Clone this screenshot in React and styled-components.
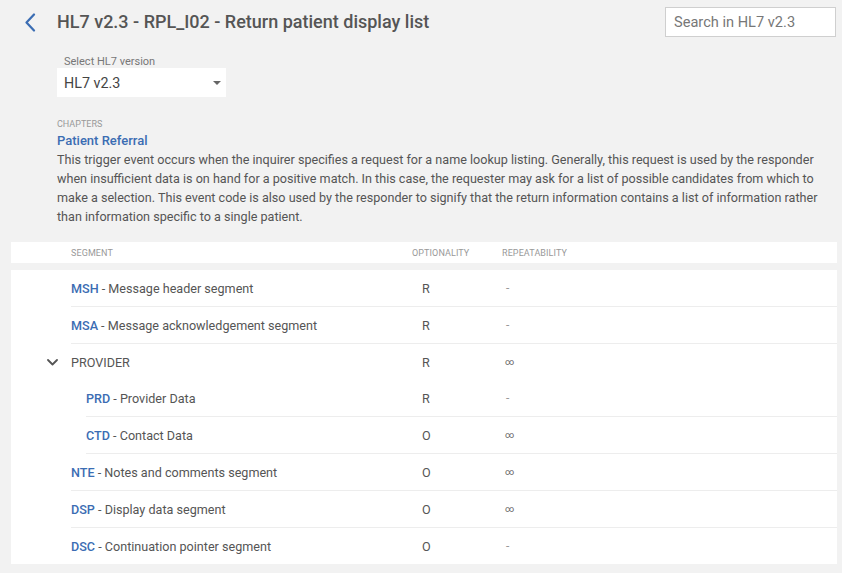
import React from "react";
import styled, { createGlobalStyle } from "styled-components";

const Global = createGlobalStyle`
  html, body { margin: 0; padding: 0; background: #f2f2f2; }
  body { font-family: Roboto, "Liberation Sans", Arial, sans-serif; color: #555; }
  * { box-sizing: border-box; }
`;

const Page = styled.div`
  width: 842px;
  min-height: 573px;
  background: #f2f2f2;
  padding-bottom: 9px;
`;

const TopBar = styled.header`
  display: flex;
  align-items: flex-start;
  height: 44px;
  padding: 7px 6px 0 22px;
`;

const BackButton = styled.button`
  width: 16px;
  height: 30px;
  padding: 0;
  margin: 0 19px 0 0;
  border: none;
  background: transparent;
  display: flex;
  align-items: center;
  justify-content: center;
  cursor: pointer;
`;

const Title = styled.h1`
  flex: 1;
  margin: 0;
  font-size: 18px;
  font-weight: 500;
  line-height: 30px;
  color: #555;
`;

const Search = styled.input`
  width: 171px;
  height: 30px;
  border: 1px solid #cfcfcf;
  background: #fff;
  padding: 0 8px;
  font-family: inherit;
  font-size: 14.6px;
  color: #555;
  outline: none;
  &::placeholder { color: #777; }
`;

const Content = styled.section`
  padding: 0 14px 0 57px;
`;

const Field = styled.div`
  display: flex;
  flex-direction: column;
  margin-top: 12px;
`;

const FieldLabel = styled.label`
  font-size: 11px;
  line-height: 12px;
  color: #777;
  padding-left: 7px;
`;

const SelectBox = styled.div`
  width: 169px;
  height: 29px;
  background: #fff;
  display: flex;
  align-items: center;
  justify-content: space-between;
  padding: 0 4px 0 7px;
  font-size: 14.3px;
  color: #444;
`;

const Caret = styled.span`
  width: 0;
  height: 0;
  border-left: 4px solid transparent;
  border-right: 4px solid transparent;
  border-top: 4px solid #666;
  margin-right: 1px;
`;

const Overline = styled.div`
  margin-top: 21px;
  font-size: 9px;
  line-height: 13px;
  text-transform: uppercase;
  color: #999;
`;

const Chapter = styled.a`
  display: block;
  font-size: 13px;
  font-weight: 500;
  line-height: 19px;
  color: #3b6db3;
  text-decoration: none;
`;

const Description = styled.p`
  margin: 0;
  font-size: 12.6px;
  line-height: 19px;
  color: #555;
`;

const TableHead = styled.div`
  display: flex;
  align-items: center;
  height: 21px;
  margin: 16px 5px 0 11px;
  padding-left: 60px;
  background: #fff;
`;

const HeadCell = styled.div`
  width: ${(p) => p.$w}px;
  font-size: 9px;
  text-transform: uppercase;
  color: #999;
  letter-spacing: 0.1px;
`;

const TableBody = styled.div`
  margin: 7px 5px 0 11px;
  background: #fff;
`;

const Row = styled.div`
  display: flex;
  align-items: center;
  height: ${(p) => (p.$noLine ? 36 : 37)}px;
  margin-left: ${(p) => p.$indent}px;
  border-bottom: ${(p) => (p.$noLine ? "none" : "1px solid #ededed")};
`;

const Toggle = styled.span`
  width: 24px;
  display: flex;
  align-items: center;
  justify-content: flex-start;
`;

const SegmentCell = styled.div`
  width: ${(p) => p.$w}px;
  font-size: 12.6px;
  color: #555;
  white-space: nowrap;
`;

const Code = styled.span`
  color: #3b6db3;
  font-weight: 500;
`;

const OptCell = styled.div`
  width: 90px;
  padding-left: 10px;
  font-size: 12.6px;
  color: #555;
`;

const RepCell = styled.div`
  padding-left: ${(p) => (p.$inf ? 3 : 4)}px;
  font-size: ${(p) => (p.$inf ? 9 : 12)}px;
  color: ${(p) => (p.$inf ? "#666" : "#999")};
`;

const rows = [
  { code: "MSH", name: "Message header segment", opt: "R", rep: "-", level: 0 },
  { code: "MSA", name: "Message acknowledgement segment", opt: "R", rep: "-", level: 0 },
  { group: "PROVIDER", opt: "R", rep: "∞", level: 0 },
  { code: "PRD", name: "Provider Data", opt: "R", rep: "-", level: 1 },
  { code: "CTD", name: "Contact Data", opt: "O", rep: "∞", level: 1 },
  { code: "NTE", name: "Notes and comments segment", opt: "O", rep: "∞", level: 0 },
  { code: "DSP", name: "Display data segment", opt: "O", rep: "∞", level: 0 },
  { code: "DSC", name: "Continuation pointer segment", opt: "O", rep: "-", level: 0, last: true },
];

const SEG_END = 401; // optionality column start relative to panel left

export default function App() {
  return (
    <Page>
      <Global />
      <TopBar>
        <BackButton aria-label="Back">
          <svg width="12" height="19" viewBox="0 0 12 19">
            <path d="M10 1.5 L2.5 9.5 L10 17.5" fill="none" stroke="#3b6db3" strokeWidth="2.2" strokeLinecap="round" strokeLinejoin="round" />
          </svg>
        </BackButton>
        <Title>HL7 v2.3 - RPL_I02 - Return patient display list</Title>
        <Search placeholder="Search in HL7 v2.3" />
      </TopBar>
      <Content>
        <Field>
          <FieldLabel>Select HL7 version</FieldLabel>
          <SelectBox>
            <span>HL7 v2.3</span>
            <Caret />
          </SelectBox>
        </Field>
        <Overline>Chapters</Overline>
        <Chapter href="#">Patient Referral</Chapter>
        <Description>
          This trigger event occurs when the inquirer specifies a request for a name lookup listing. Generally, this request is used by the responder when insufficient data is on hand for a positive match. In this case, the requester may ask for a list of possible candidates from which to make a selection. This event code is also used by the responder to signify that the return information contains a list of information rather than information specific to a single patient.
        </Description>
      </Content>
      <TableHead>
        <HeadCell $w={341}>Segment</HeadCell>
        <HeadCell $w={90}>Optionality</HeadCell>
        <HeadCell $w={100}>Repeatability</HeadCell>
      </TableHead>
      <TableBody>
        {rows.map((r, i) => {
          if (r.group) {
            return (
              <Row key={i} $indent={36} $noLine>
                <Toggle>
                  <svg width="11" height="7" viewBox="0 0 11 7">
                    <path d="M1 1 L5.5 5.5 L10 1" fill="none" stroke="#555" strokeWidth="1.8" strokeLinecap="round" strokeLinejoin="round" />
                  </svg>
                </Toggle>
                <SegmentCell $w={SEG_END - 60}>{r.group}</SegmentCell>
                <OptCell>{r.opt}</OptCell>
                <RepCell $inf={r.rep === "∞"}>{r.rep}</RepCell>
              </Row>
            );
          }
          const indent = r.level ? 75 : 60;
          return (
            <Row key={i} $indent={indent} $noLine={r.last}>
              <SegmentCell $w={SEG_END - indent}>
                <Code>{r.code}</Code> - {r.name}
              </SegmentCell>
              <OptCell>{r.opt}</OptCell>
              <RepCell $inf={r.rep === "∞"}>{r.rep}</RepCell>
            </Row>
          );
        })}
      </TableBody>
    </Page>
  );
}
